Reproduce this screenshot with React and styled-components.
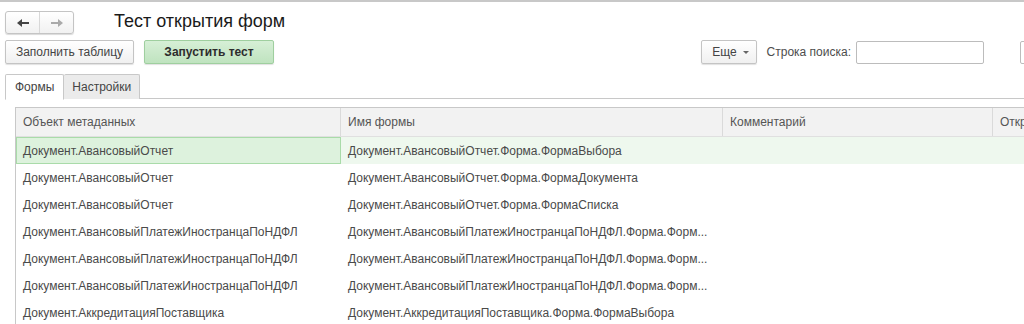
import React from "react";
import styled, { createGlobalStyle } from "styled-components";

const GlobalStyle = createGlobalStyle`
  html, body {
    margin: 0;
    padding: 0;
    background: #ffffff;
    overflow: hidden;
  }
  body {
    font-family: "Liberation Sans", Arial, sans-serif;
    font-size: 12px;
    color: #4d4d4d;
  }
`;

const rows = [
  ["Документ.АвансовыйОтчет", "Документ.АвансовыйОтчет.Форма.ФормаВыбора"],
  ["Документ.АвансовыйОтчет", "Документ.АвансовыйОтчет.Форма.ФормаДокумента"],
  ["Документ.АвансовыйОтчет", "Документ.АвансовыйОтчет.Форма.ФормаСписка"],
  ["Документ.АвансовыйПлатежИностранцаПоНДФЛ", "Документ.АвансовыйПлатежИностранцаПоНДФЛ.Форма.Форм..."],
  ["Документ.АвансовыйПлатежИностранцаПоНДФЛ", "Документ.АвансовыйПлатежИностранцаПоНДФЛ.Форма.Форм..."],
  ["Документ.АвансовыйПлатежИностранцаПоНДФЛ", "Документ.АвансовыйПлатежИностранцаПоНДФЛ.Форма.Форм..."],
  ["Документ.АккредитацияПоставщика", "Документ.АккредитацияПоставщика.Форма.ФормаВыбора"],
];

export default function App() {
  return (
    <Page>
      <GlobalStyle />
      <TitleBar>
        <NavGroup>
          <NavButton>
            <Arrow dir="left" color="#444" />
          </NavButton>
          <NavButton>
            <Arrow dir="right" color="#aaa" />
          </NavButton>
        </NavGroup>
        <Title>Тест открытия форм</Title>
      </TitleBar>

      <Toolbar>
        <Button $width={129}>Заполнить таблицу</Button>
        <GreenButton>Запустить тест</GreenButton>
        <Spacer />
        <MoreButton>
          Еще <Caret />
        </MoreButton>
        <SearchLabel>Строка поиска:</SearchLabel>
        <SearchInput />
        <CutInput />
      </Toolbar>

      <Tabs>
        <Tab $active>Формы</Tab>
        <Tab>Настройки</Tab>
        <TabLine />
      </Tabs>

      <Panel>
        <Table>
          <HeaderRow>
            <HeadCell $w={325}>Объект метаданных</HeadCell>
            <HeadCell $w={382}>Имя формы</HeadCell>
            <HeadCell $w={270}>Комментарий</HeadCell>
            <HeadCell $w={120}>Открыт</HeadCell>
          </HeaderRow>
          {rows.map((r, i) => (
            <Row key={i} $selected={i === 0}>
              <Cell $w={325} $focused={i === 0}>{r[0]}</Cell>
              <Cell $w={382}>{r[1]}</Cell>
              <Cell $w={270} />
              <Cell $w={120} />
            </Row>
          ))}
        </Table>
      </Panel>
    </Page>
  );
}

function Arrow({ dir, color }) {
  return (
    <svg width="14" height="10" viewBox="0 0 14 10">
      {dir === "left" ? (
        <path d="M1 5 L6 1 L6 4 L13 4 L13 6 L6 6 L6 9 Z" fill={color} />
      ) : (
        <path d="M13 5 L8 1 L8 4 L1 4 L1 6 L8 6 L8 9 Z" fill={color} />
      )}
    </svg>
  );
}

const Page = styled.div`
  width: 1024px;
  height: 324px;
  border-top: 2px solid #c8c8c8;
  box-sizing: border-box;
  overflow: hidden;
`;

const TitleBar = styled.div`
  display: flex;
  align-items: center;
  height: 29px;
  padding: 6px 0 0 5px;
`;

const NavGroup = styled.div`
  display: flex;
  border: 1px solid #c4c4c4;
  border-radius: 3px;
  box-shadow: 0 1px 1px rgba(0, 0, 0, 0.15);
  background: linear-gradient(#ffffff, #f1f1f1);
`;

const NavButton = styled.div`
  width: 33px;
  height: 21px;
  display: flex;
  align-items: center;
  justify-content: center;
  & + & {
    border-left: 1px solid #d8d8d8;
  }
`;

const Title = styled.div`
  margin-left: 40px;
  font-size: 18px;
  color: #1a1a1a;
  margin-top: -3px;
`;

const Toolbar = styled.div`
  display: flex;
  align-items: center;
  height: 24px;
  margin-top: 3px;
  padding-left: 5px;
`;

const Button = styled.div`
  box-sizing: border-box;
  width: ${(p) => p.$width}px;
  height: 24px;
  display: flex;
  align-items: center;
  justify-content: center;
  border: 1px solid #c4c4c4;
  border-radius: 2px;
  background: linear-gradient(#ffffff, #f0f0f0);
  box-shadow: 0 1px 1px rgba(0, 0, 0, 0.12);
  color: #444;
  font-size: 12px;
`;

const GreenButton = styled(Button)`
  width: 130px;
  margin-left: 10px;
  border-color: #9fcf9f;
  background: linear-gradient(#d6efd6, #bfe3bf);
  color: #2d2d2d;
  font-weight: bold;
`;

const Spacer = styled.div`
  flex: 1;
`;

const MoreButton = styled(Button)`
  width: 56px;
  gap: 6px;
  padding-left: 4px;
`;

const Caret = styled.span`
  width: 0;
  height: 0;
  border-left: 3px solid transparent;
  border-right: 3px solid transparent;
  border-top: 3px solid #666;
  margin-top: 1px;
`;

const SearchLabel = styled.div`
  margin-left: 10px;
  color: #4d4d4d;
  font-size: 12px;
`;

const SearchInput = styled.div`
  box-sizing: border-box;
  width: 128px;
  height: 23px;
  margin-left: 5px;
  border: 1px solid #bcbcbc;
  border-radius: 2px;
  background: #fff;
`;

const CutInput = styled(SearchInput)`
  width: 20px;
  margin-left: 36px;
  margin-right: -16px;
  flex-shrink: 0;
`;

const Tabs = styled.div`
  display: flex;
  align-items: flex-end;
  height: 26px;
  margin-top: 9px;
  padding-left: 5px;
`;

const Tab = styled.div`
  box-sizing: border-box;
  height: ${(p) => (p.$active ? 26 : 25)}px;
  padding: 0 ${(p) => (p.$active ? 9 : 8)}px;
  display: flex;
  align-items: center;
  border: 1px solid #c8c8c8;
  border-bottom: ${(p) => (p.$active ? "1px solid #ffffff" : "none")};
  border-radius: 2px 2px 0 0;
  background: ${(p) => (p.$active ? "#ffffff" : "#ebebeb")};
  color: #444;
  font-size: 12px;
  & + & {
    border-left: none;
  }
  position: relative;
  z-index: 1;
  margin-bottom: ${(p) => (p.$active ? -1 : 0)}px;
`;

const TabLine = styled.div`
  flex: 1;
  border-bottom: 1px solid #c8c8c8;
`;

const Panel = styled.div`
  padding: 8px 0 0 15px;
`;

const Table = styled.div`
  border-top: 1px solid #c8c8c8;
  border-left: 1px solid #c8c8c8;
  width: 1100px;
`;

const HeaderRow = styled.div`
  display: flex;
  height: 28px;
  background: #f2f2f2;
  border-bottom: 1px solid #e0e0e0;
`;

const HeadCell = styled.div`
  box-sizing: border-box;
  width: ${(p) => p.$w}px;
  flex-shrink: 0;
  padding-left: 7px;
  display: flex;
  align-items: center;
  border-right: 1px solid #dadada;
  color: #555;
  font-size: 12px;
`;

const Row = styled.div`
  display: flex;
  height: 27px;
  background: ${(p) => (p.$selected ? "#eef8ee" : "#ffffff")};
`;

const Cell = styled.div`
  box-sizing: border-box;
  width: ${(p) => p.$w}px;
  flex-shrink: 0;
  padding-left: ${(p) => (p.$focused ? 6 : 7)}px;
  display: flex;
  align-items: center;
  white-space: nowrap;
  overflow: hidden;
  color: #4a4a4a;
  font-size: 12px;
  border: ${(p) => (p.$focused ? "1px solid #a9dba9" : "none")};
  background: ${(p) => (p.$focused ? "#ddf2dd" : "transparent")};
`;
